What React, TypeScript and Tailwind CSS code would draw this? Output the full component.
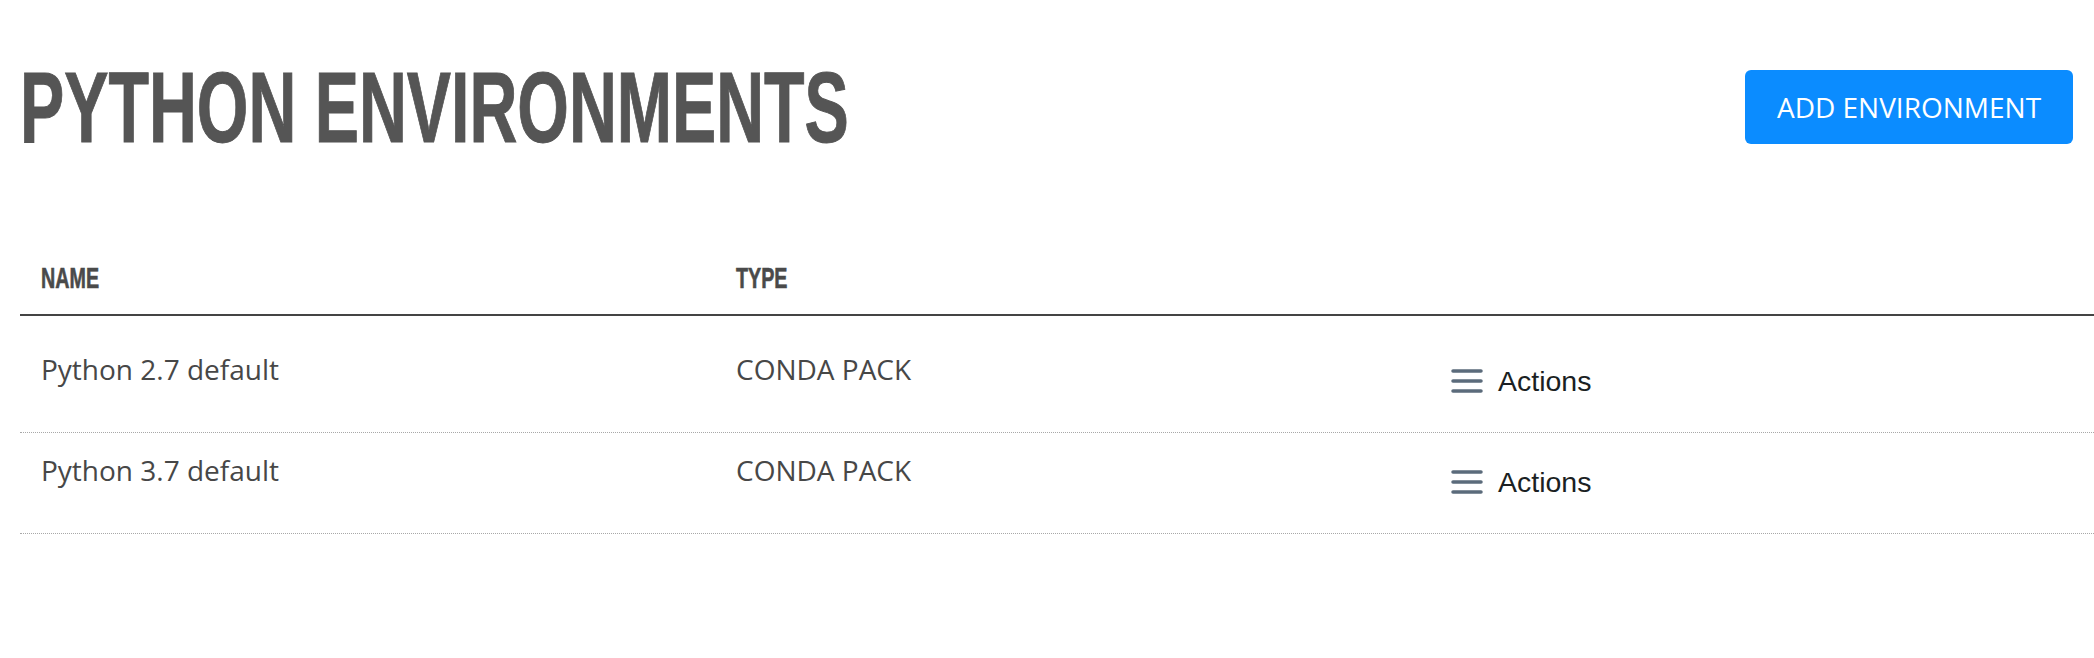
import React from 'react';

type Env = {
  name: string;
  type: string;
};

const envs: Env[] = [
  { name: 'Python 2.7 default', type: 'CONDA PACK' },
  { name: 'Python 3.7 default', type: 'CONDA PACK' },
];

const MenuIcon = () => (
  <svg width="32" height="26" viewBox="0 0 32 26" fill="none" className="shrink-0">
    <path
      d="M2 3h28M2 13h28M2 23h28"
      stroke="#5b6b7b"
      strokeWidth="3.5"
      strokeLinecap="round"
    />
  </svg>
);

const HeadCell: React.FC<{ label: string }> = ({ label }) => (
  <div className="pl-[21px]">
    <span className="inline-block origin-left scale-x-[0.68] font-['Liberation_Sans',Arial,sans-serif] text-[29px] leading-none font-bold text-[#4a4a4a] [-webkit-text-stroke:0.6px_#4a4a4a]">
      {label}
    </span>
  </div>
);

const App: React.FC = () => {
  return (
    <div className="min-h-[658px] w-full overflow-hidden bg-white">
      <div className="flex items-start justify-between pt-[57px] pr-[21px] pl-[20px]">
        <h1 className="h-[100px] whitespace-nowrap">
          <span className="inline-block origin-left scale-x-[0.663] font-['Liberation_Sans',Arial,sans-serif] text-[100px] leading-none font-bold text-[#555555] [-webkit-text-stroke:1px_#555555]">
            PYTHON ENVIRONMENTS
          </span>
        </h1>
        <button className="mt-[13px] flex h-[74px] w-[328px] items-center justify-center rounded-[6px] bg-[#0b8cff] font-['Open_Sans',sans-serif] text-[28px] text-white">
          ADD ENVIRONMENT
        </button>
      </div>

      <div className="mt-[107px] pl-[20px]">
        <div className="grid h-[52px] grid-cols-[695px_715px_1fr] border-b-2 border-[#444444]">
          <HeadCell label="NAME" />
          <HeadCell label="TYPE" />
          <div />
        </div>

        <div className="mt-[16px]">
          {envs.map((env) => (
            <div
              key={env.name}
              className="grid h-[101px] grid-cols-[695px_715px_1fr] border-b border-dotted border-[#a8a8a8]"
            >
              <div className="pt-[23px] pl-[21px] font-['Open_Sans',sans-serif] text-[28px] leading-none text-[#474747]">
                {env.name}
              </div>
              <div className="pt-[23px] pl-[21px] font-['Open_Sans',sans-serif] text-[28px] leading-none text-[#474747]">
                {env.type}
              </div>
              <div className="pt-[35px] pl-[21px]">
                <div className="flex items-center gap-[15px]">
                  <MenuIcon />
                  <span className="font-['Liberation_Sans',Arial,sans-serif] text-[28.5px] leading-none text-[#1b1f23]">
                    Actions
                  </span>
                </div>
              </div>
            </div>
          ))}
        </div>
      </div>
    </div>
  );
};

export default App;
